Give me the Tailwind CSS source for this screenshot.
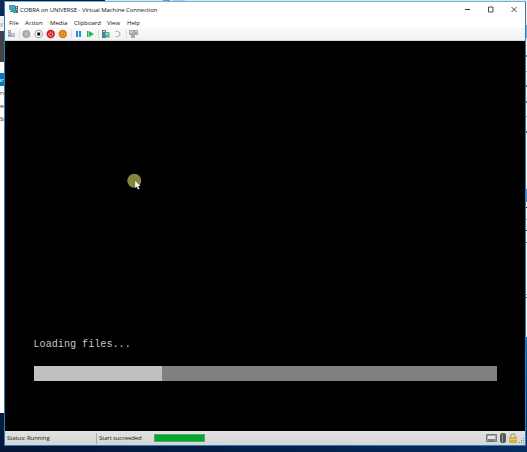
<!DOCTYPE html>
<html lang="en">
<head>
<meta charset="utf-8">
<title>COBRA on UNIVERSE - Virtual Machine Connection</title>
<script src="https://cdn.jsdelivr.net/npm/@tailwindcss/browser@4"></script>
</head>
<body class="relative h-[452px] w-[527px] overflow-hidden bg-[#031a3d] font-['Open_Sans','Noto_Sans',sans-serif] text-[6px] leading-none text-[#222]">
<!-- Desktop, left edge -->
<div class="absolute left-0 top-0 flex h-[452px] w-[5px] flex-col overflow-hidden whitespace-nowrap">
  <div class="h-[16px] shrink-0 bg-[#0a2a57]"></div>
  <div class="flex h-[15px] shrink-0 items-center bg-[#f3f3f3] text-[#aaa]">g</div>
  <div class="h-[31px] shrink-0 bg-[#444448]"></div>
  <div class="h-[11px] shrink-0 bg-white"></div>
  <div class="flex h-[13px] shrink-0 items-center bg-[#0877c5] text-white"><span class="-ml-[2px]">ar</span></div>
  <div class="flex h-[327px] shrink-0 flex-col bg-white">
    <div class="flex h-[14px] items-center">rv</div><div class="flex h-[12px] items-center">er</div><div class="flex h-[14px] items-center">St</div>
  </div>
</div>
<!-- Desktop, top edge -->
<div class="absolute left-[105px] top-0 flex h-[2px] w-[422px] bg-[#dce6ee]">
  <div class="ml-[58px] h-[2px] w-[7px] bg-[#6b8fd0]"></div><div class="ml-[3px] h-[2px] w-[12px] bg-[#a6cdf0]"></div>
</div>
<!-- Desktop, right edge -->
<div class="absolute right-0 top-0 flex h-[452px] w-[2px] flex-col bg-[#063a74]">
  <div class="h-[25px] bg-[#e8f0f6]"></div>
  <div class="h-[13px] bg-[#77aadd]"></div>
  <div class="flex h-[151px] flex-col justify-between bg-[#f2f5f8] pt-[17px] pb-[56px]">
    <i class="h-[2px] bg-[#526478]"></i><i class="h-px bg-[#8a9bac]"></i><i class="h-[2px] bg-[#526478]"></i><i class="h-[2px] bg-[#68798b]"></i><i class="h-px bg-[#8a9bac]"></i><i class="h-[2px] bg-[#526478]"></i>
  </div>
  <div class="h-[13px] bg-[#4f92db]"></div>
  <div class="flex h-[46px] flex-col justify-between bg-[#f2f5f8] py-[5px]">
    <i class="h-px bg-[#222]"></i><i class="h-px bg-[#8a9bac]"></i><i class="h-px bg-[#333]"></i><i class="h-px bg-[#526478]"></i>
  </div>
  <div class="flex h-[89px] flex-col bg-[#f2f5f8] pt-[46px]"><i class="h-px bg-[#8a9bac]"></i><i class="mt-[2px] h-px bg-[#526478]"></i></div>
  <div class="h-[50px] bg-linear-to-b from-[#1767c6] to-[#07509d]"></div>
  <div class="h-[65px] bg-linear-to-b from-[#07509d] to-[#04285a]"></div>
</div>
<div class="absolute bottom-0 left-0 h-[7px] w-[527px] bg-linear-to-r from-[#031536] via-[#04204b] to-[#052c60]"></div>

<!-- Window -->
<div class="absolute left-[4px] top-[1px] flex h-[445px] w-[522px] flex-col border border-[#2f7eb4] border-t-[#71b4d6] bg-white">
  <header class="flex h-[16px] shrink-0 items-center pb-px pl-[4px]">
    <svg class="h-[9px] w-[9px]" viewBox="0 0 9 9"><path d="M0 0h6v5H0z" fill="#36a6de"/><path d="M0 0h6v1H0z" fill="#6a8796"/><path d="M2 5h2v1h2v1H1V6h1z" fill="#667d8c"/><path d="M6 1h3v7H6z" fill="#556e7c"/><path d="M7 2h1v1H7zM7 4h1v1H7z" fill="#c4e4ee"/><path d="M4 5h3v3H4z" fill="#38ac8e"/></svg>
    <h1 class="ml-[2px] w-[160px] whitespace-nowrap text-[6px] tracking-[-0.06px] text-[#111]">COBRA on UNIVERSE - Virtual Machine Connection</h1>
    <svg class="ml-auto mr-[7px] h-[7px] w-[54px]" viewBox="0 0 54 7" fill="none" stroke="#333"><path d="M1 3.500h5"/><path d="M24.500 1h4.500v5h-4.500z" stroke-width=".9"/><path d="m47.500 1 5 5m0-5-5 5" stroke-width=".9"/></svg>
  </header>
  <nav class="flex h-[10px] shrink-0 items-center whitespace-nowrap text-[6px] text-[#111]">
    <span class="ml-[4px] w-[16px]">File</span><span class="w-[25px]">Action</span><span class="w-[24px]">Media</span><span class="w-[33px] tracking-[-0.05px]">Clipboard</span><span class="w-[20px]">View</span><span>Help</span>
  </nav>
  <div class="flex h-[13px] shrink-0 items-center border-b border-[#d8d8d8] bg-linear-to-b from-[#fafafa] to-[#f1f1f1]">
    <svg class="h-[12px] w-[136px]" viewBox="0 0 136 12">
      <path d="M3 2h3v7H3z" fill="#9ba8bb"/><path d="M6 5h4v4H6z" fill="#aeb6c5"/><path d="M4 3h1v1H4zM4 5h1v1H4zM7 6h2v1H7z" fill="#e8ecf5"/>
      <path d="M14.500 2v8M66.500 2v8M93.500 2v8M121.500 2v8" stroke="#ddd"/>
      <circle cx="21.300" cy="6" r="4" fill="#aaa"/><circle cx="21.300" cy="6" r="2" fill="#bbb"/>
      <circle cx="33.700" cy="6" r="3.800" fill="#fff" stroke="#888" stroke-width=".8"/><path d="M32.200 4.500h3v3h-3z" fill="#111"/>
      <circle cx="45.700" cy="6" r="4.200" fill="#d31f2b"/><path d="M44.300 4.800a2 2 0 1 0 2.800 0M45.700 3.500v2.300" stroke="#fff" stroke-width=".6" fill="none"/>
      <circle cx="57.800" cy="6" r="4.200" fill="#dd7b13"/><path d="M56.400 4.800a2 2 0 1 0 2.800 0M57.800 3.500v2.300" stroke="#ffd092" stroke-width=".6" fill="none"/>
      <path d="M71 3h2v6h-2zM74 3h2v6h-2z" fill="#278dcc"/>
      <path d="M82 3h1.500v6H82z" fill="#21b858"/><path d="m84 3 5 3-5 3z" fill="#21b858"/>
      <path d="M97 2h4v8h-4z" fill="#4a8194"/><path d="M98 3h2v1h-2z" fill="#c5eee8"/><path d="M100 4h4.500v5.500h-4.500z" fill="#48b88b"/><path d="M101 6h3M102 5l-1 1 1 1" stroke="#dff" stroke-width=".7" fill="none"/>
      <path d="M110.500 3.500h2a2.400 2.400 0 0 1 0 5h-2" stroke="#aaa" fill="none"/>
      <path d="M124 2h5v5h-5zM129 2h4v5h-4zM126 7h4v3h-4z" fill="#aaa"/><path d="M125 3h3v2h-3zM130 3h2v1h-2z" fill="#ccc"/>
    </svg>
  </div>
  <main class="flex h-[390px] shrink-0 flex-col bg-black pl-[29px] pt-[297px]">
    <p class="-ml-[0.500px] h-[13px] whitespace-nowrap font-['Liberation_Mono',monospace] text-[10.150px] leading-[13px] text-[#c6c6c6]">Loading files...</p>
    <div class="mt-[15px] h-[15px] w-[463px] bg-[#808080]"><div class="h-full w-[128px] bg-[#c0c0c0]"></div></div>
  </main>
  <footer class="flex h-[14px] shrink-0 items-center whitespace-nowrap bg-linear-to-b from-[#e2e2e2] to-[#d6d6d6] text-[6px]">
    <span class="w-[91px] pl-[2px] tracking-[-0.080px]">Status: Running</span>
    <span class="flex h-[11px] w-[58px] items-center border-l border-[#aaa] pl-[2px] tracking-[-0.140px]">Start succeeded</span>
    <div class="h-[8px] w-[51px] border border-[#4eab66] bg-[#06a52d]"></div>
    <svg class="ml-auto h-[13px] w-[40px]" viewBox="0 0 40 13">
      <path d="M1.500 2.500h10v7h-10z" fill="#aaa" stroke="#777"/><path d="M3 4h7v3H3z" fill="#e7e7e7"/><path d="M3 8h7" stroke="#555"/>
      <rect x="15" y="1" width="6" height="10" rx="2.500" fill="#555"/><path d="M17.500 2v8" stroke="#999"/>
      <path d="M25.800 5V4a2.200 2.200 0 0 1 4.400 0v1" fill="none" stroke="#aaa189" stroke-width="1.200"/><path d="M24 5h8v6h-8z" fill="#d8ad43"/><path d="M24 7h8v1h-8z" fill="#e7ca78"/>
      <path d="M38 6h1v1h-1zM36 8h1v1h-1zM38 8h1v1h-1zM34 10h1v1h-1zM36 10h1v1h-1zM38 10h1v1h-1z" fill="#888"/>
    </svg>
  </footer>
</div>
<!-- Highlighted pointer -->
<svg class="absolute left-[126px] top-[172px] h-[18px] w-[18px]" viewBox="0 0 18 18"><circle cx="8.300" cy="8.700" r="7" fill="#84863e"/><path d="M9 8.500v7.500l1.700-1.500 1.300 3 1.500-.7-1.300-2.700h2.300z" fill="#fff" stroke="#555" stroke-width=".3"/></svg>
</body>
</html>
